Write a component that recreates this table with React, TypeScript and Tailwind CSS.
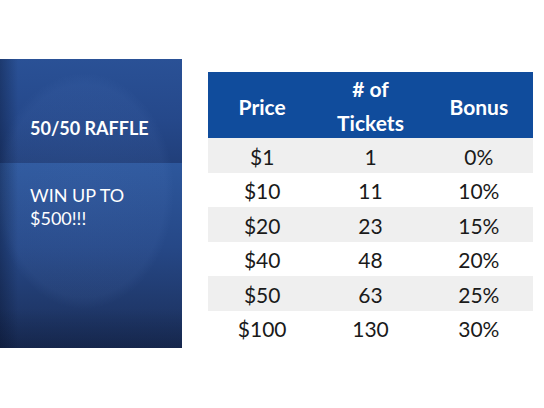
const rows = [
  ["$1", "1", "0%"],
  ["$10", "11", "10%"],
  ["$20", "23", "15%"],
  ["$40", "48", "20%"],
  ["$50", "63", "25%"],
  ["$100", "130", "30%"],
];

function RafflePanel() {
  return (
    <div className="relative flex h-[289px] w-[182px] shrink-0 flex-col overflow-hidden text-white">
      <div className="h-[104px] bg-[linear-gradient(180deg,#2a5196_0%,#25488a_60%,#213f7a_100%)] pl-[30px] pt-[59px]">
        <p className="relative z-10 text-[18px] font-bold leading-[20px]">50/50 RAFFLE</p>
      </div>
      <div className="flex-1 bg-[linear-gradient(180deg,#2d579c_0%,#264887_45%,#1b2e58_100%)] pl-[30px] pt-[21px]">
        <p className="relative z-10 text-[18px] leading-[23px]">
          WIN UP TO
          <br />
          $500!!!
        </p>
      </div>
      {/* soft circular glow + edge shading */}
      <div className="pointer-events-none absolute inset-0 bg-[radial-gradient(ellipse_90px_118px_at_84px_132px,rgba(110,150,220,0.09)_0%,rgba(110,150,220,0.07)_90%,rgba(110,150,220,0)_100%)]" />
      <div className="pointer-events-none absolute inset-0 bg-[linear-gradient(90deg,rgba(5,15,40,0.35)_0px,rgba(5,15,40,0)_18px)]" />
      <div className="pointer-events-none absolute inset-0 bg-[linear-gradient(0deg,rgba(5,15,40,0.25)_0px,rgba(5,15,40,0)_40px)]" />
    </div>
  );
}

export default function App() {
  return (
    <div
      className="flex h-[408px] w-[544px] items-start bg-white pt-[59px]"
      style={{ fontFamily: "Lato, 'Open Sans', sans-serif" }}
    >
      <RafflePanel />
      <div className="ml-[26px] mt-[13px] w-[325px]">
        <div className="grid h-[66px] grid-cols-3 items-center bg-[#104c9c] text-center text-[21px] font-bold text-white">
          <div className="pt-[2px]">Price</div>
          <div className="leading-[34px]">
            # of
            <br />
            Tickets
          </div>
          <div className="pt-[2px]">Bonus</div>
        </div>
        {rows.map((r, i) => (
          <div
            key={r[0]}
            className={
              "grid h-[34.5px] grid-cols-3 items-center pt-[3px] text-center text-[21px] leading-[30px] text-[#1a1a1a] " +
              (i % 2 === 0 ? "bg-[#efefef]" : "bg-white")
            }
          >
            <div>{r[0]}</div>
            <div>{r[1]}</div>
            <div>{r[2]}</div>
          </div>
        ))}
      </div>
    </div>
  );
}
